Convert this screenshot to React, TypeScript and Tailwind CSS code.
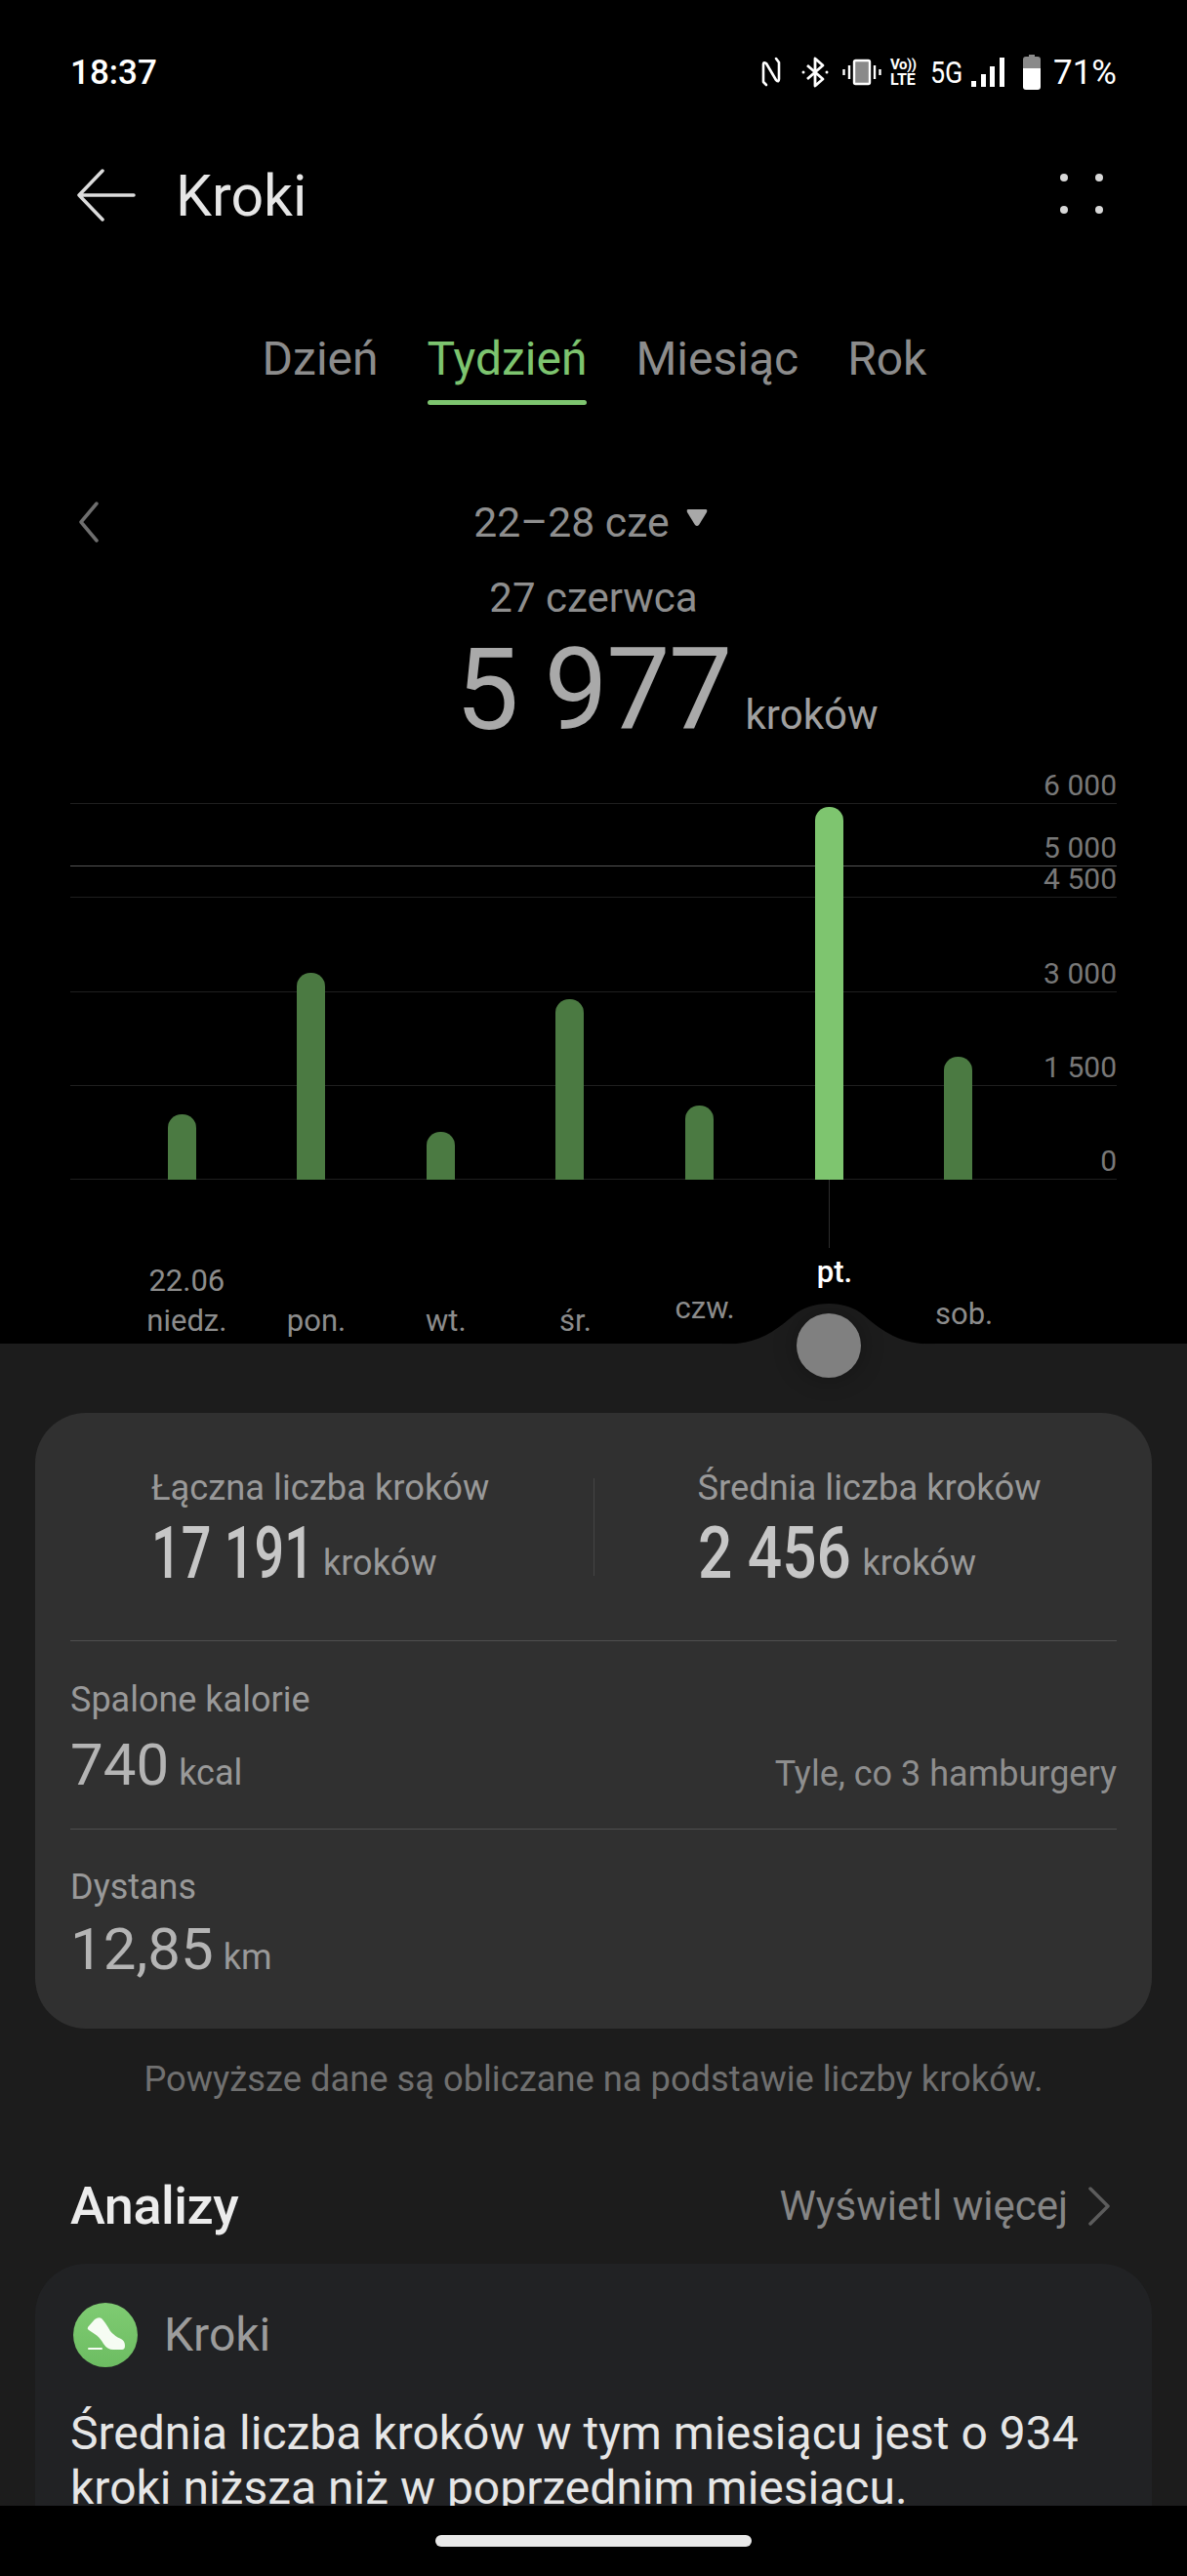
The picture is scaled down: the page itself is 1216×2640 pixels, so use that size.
import React from "react";

const roboto = "font-['Roboto',sans-serif]";

const bars = [
  { h: 67, on: false },
  { h: 212, on: false },
  { h: 49, on: false },
  { h: 185, on: false },
  { h: 76, on: false },
  { h: 382, on: true },
  { h: 126, on: false },
];

const gridRows = ["6 000", "4 500", "3 000", "1 500", "0"];

function StatusIcons() {
  return (
    <div className="flex items-center">
      <svg width="20" height="32" viewBox="0 0 20 32" fill="none" stroke="#fff" strokeWidth="2.6" strokeLinecap="round" strokeLinejoin="round">
        <path d="M5 29 L2 26 V8 Q2 5 5 7 L15 24 Q18 27 18 23 V6 L15 2" />
      </svg>
      <svg className="ml-[20px]" width="30" height="32" viewBox="0 0 30 32" fill="none" stroke="#fff" strokeWidth="2.8" strokeLinejoin="round">
        <path d="M7 9 L23 23 L15 30 V2 L23 9 L7 23" />
        <circle cx="3" cy="16" r="1.5" fill="#fff" stroke="none" />
        <circle cx="27" cy="16" r="1.5" fill="#fff" stroke="none" />
      </svg>
      <svg className="ml-[13px]" width="40" height="28" viewBox="0 0 40 28" fill="none">
        <rect x="12" y="2" width="16" height="24" rx="1.5" fill="#8a8a8a" stroke="#fff" strokeWidth="2.4" />
        <path d="M7 7 V21 M33 7 V21" stroke="#fff" strokeWidth="2.4" />
        <path d="M1.5 11 V17 M38.5 11 V17" stroke="#fff" strokeWidth="2.4" />
      </svg>
      <div className="ml-[9px] flex w-[30px] flex-col items-start font-bold text-white">
        <span className="text-[15px] leading-[15px] tracking-[-0.5px]">Vo))</span>
        <span className="text-[16px] leading-[16px]">LTE</span>
      </div>
      <span className="ml-[11px] inline-block w-[31px] origin-left scale-x-[0.84] whitespace-nowrap text-[32px] leading-none text-white">5G</span>
      <svg className="ml-[11px]" width="34" height="30" viewBox="0 0 34 30" fill="#fff">
        <rect x="0" y="24" width="5" height="6" />
        <rect x="10" y="17" width="5" height="13" />
        <rect x="19" y="9" width="5" height="21" />
        <rect x="29" y="0" width="5" height="30" />
      </svg>
      <svg className="ml-[19px]" width="18" height="36" viewBox="0 0 18 36">
        <path d="M6 0 H12 V2 H15 Q18 2 18 5 V16 H0 V5 Q0 2 3 2 H6 Z" fill="#8a8a8a" />
        <path d="M0 14 H18 V33 Q18 36 15 36 H3 Q0 36 0 33 Z" fill="#fff" />
      </svg>
      <span className="ml-[13px] text-[35px] leading-none text-white">71%</span>
    </div>
  );
}

function App() {
  return (
    <div className={`flex h-[2640px] w-[1216px] flex-col overflow-hidden bg-black ${roboto}`}>
      {/* status bar */}
      <div className="flex h-[148px] shrink-0 items-center justify-between px-[72px]">
        <span className="text-[35px] font-medium leading-none text-white">18:37</span>
        <StatusIcons />
      </div>

      {/* app bar */}
      <div className="flex h-[104px] shrink-0 items-center justify-between pl-[79px] pr-[72px]">
        <div className="flex items-center">
          <svg width="60" height="56" viewBox="0 0 60 56" fill="none" stroke="#dcdcdc" strokeWidth="3.5" strokeLinecap="round" strokeLinejoin="round">
            <path d="M26 3 L2 28 L26 53 M2 28 H58" />
          </svg>
          <span className="ml-[41px] text-[59px] leading-none text-[#e6e6e6]">Kroki</span>
        </div>
        <div className="mb-[4px] mr-[14px] grid grid-cols-2 gap-x-[28px] gap-y-[25px]">
          <span className="h-[8px] w-[8px] rounded-full bg-[#d8d8d8]" />
          <span className="h-[8px] w-[8px] rounded-full bg-[#d8d8d8]" />
          <span className="h-[8px] w-[8px] rounded-full bg-[#d8d8d8]" />
          <span className="h-[8px] w-[8px] rounded-full bg-[#d8d8d8]" />
        </div>
      </div>

      {/* tabs */}
      <div className="mt-[86px] flex shrink-0 justify-center gap-[50px] pl-[2px] text-[48px] leading-[60px] text-[#8c8c8c]">
        <span>Dzień</span>
        <div className="flex flex-col">
          <span className="text-[#7dc46f]">Tydzień</span>
          <span className="mt-[12px] h-[5px] rounded-full bg-[#7dc46f]" />
        </div>
        <span>Miesiąc</span>
        <span>Rok</span>
      </div>

      {/* period selector */}
      <div className="mt-[95px] grid shrink-0 grid-cols-[1fr_auto_1fr] items-center px-[72px]">
        <svg className="ml-[8px]" width="22" height="42" viewBox="0 0 22 42" fill="none" stroke="#6e6e6e" strokeWidth="3.5" strokeLinecap="round" strokeLinejoin="round">
          <path d="M19 2 L3 21 L19 40" />
        </svg>
        <div className="mr-[6px] flex items-center">
          <span className="text-[42.7px] leading-[50px] text-[#8e8e8e]">22–28 cze</span>
          <svg className="mb-[8px] ml-[17px]" width="22" height="18" viewBox="0 0 22 18" fill="#a8a8a8">
            <path d="M2 0 H20 Q22 0 21 3 L13 16 Q11 18 9 16 L1 3 Q0 0 2 0 Z" />
          </svg>
        </div>
        <span />
      </div>

      <div className="mt-[28px] shrink-0 text-center text-[42px] leading-[50px] text-[#8e8e8e]">27 czerwca</div>

      <div className="mt-[13px] flex h-[112px] shrink-0 items-baseline justify-center pl-[150px]">
        <span className="text-[116px] leading-[112px] tracking-[-1.5px] text-[#a9a9a9]">5 977</span>
        <span className="ml-[15px] text-[42px] leading-none text-[#a0a0a0]">kroków</span>
      </div>

      {/* chart */}
      <div className="relative mx-[72px] mt-[60px] h-[386px] shrink-0">
        <div className="flex h-full flex-col justify-between">
          {gridRows.map((label) => (
            <div key={label} className="relative h-px bg-[#1f1f1f]">
              <span className="absolute bottom-[1px] right-0 text-[30px] leading-[36px] text-[#787878]">{label}</span>
            </div>
          ))}
        </div>
        <div className="absolute inset-x-0 top-[64px] h-px bg-[#555555]">
          <span className="absolute bottom-[1px] right-0 text-[30px] leading-[36px] text-[#787878]">5 000</span>
        </div>
        <div className="absolute inset-0 grid w-[976px] grid-cols-7 items-end pl-[48px]">
          {bars.map((b, i) => (
            <div key={i} className="flex justify-center">
              {b.on ? (
                <div className="w-[29px] rounded-t-[14px] bg-[#7ec56f]" style={{ height: b.h }} />
              ) : (
                <div className="w-[29px] rounded-t-[14px] bg-[#4b7a42]" style={{ height: b.h }} />
              )}
            </div>
          ))}
        </div>
      </div>

      {/* day labels */}
      <div className="relative h-[168px] w-[1054px] shrink-0 pl-[125px]">
        <div className="absolute left-[849px] top-0 h-[70px] w-px bg-[#2c2c2c]" />
        <div className="grid h-full grid-cols-7 items-end text-center text-[31px] leading-[36px] text-[#8c8c8c]">
          <div className="mb-[5px] flex flex-col items-center">
            <span className="mb-[5px]">22.06</span>
            <span>niedz.</span>
          </div>
          <span className="mb-[5px]">pon.</span>
          <span className="mb-[5px]">wt.</span>
          <span className="mb-[5px]">śr.</span>
          <span className="mb-[18px]">czw.</span>
          <span className="mb-[55px] font-medium text-white">pt.</span>
          <span className="mb-[12px]">sob.</span>
        </div>
      </div>

      {/* bottom sheet */}
      <div className="relative flex min-h-0 flex-1 flex-col bg-[#1c1c1c] px-[36px] pt-[71px]">
        <svg className="absolute left-[739px] top-[-41px]" width="220" height="42" viewBox="0 0 220 42" fill="#1c1c1c">
          <path d="M0 42 C38 42 55 28 74 12 C92 -4 128 -4 146 12 C165 28 182 42 220 42 Z" />
        </svg>
        <div className="absolute left-[816px] top-[-31px] h-[66px] w-[66px] rounded-full bg-[#808080] shadow-[0_0_24px_rgba(0,0,0,0.3)]" />

        {/* summary card */}
        <div className="flex h-[631px] shrink-0 flex-col rounded-[52px] bg-[#303030] px-[36px]">
          <div className="grid h-[234px] shrink-0 grid-cols-[1fr_1px_1fr] items-center border-b border-[#4f4f4f]">
            <div className="pb-[3px] pl-[83px]">
              <div className="text-[36.3px] leading-[44px] text-[#999999]">Łączna liczba kroków</div>
              <div className="mt-[12px] flex items-baseline">
                <span className="inline-block w-[162px] origin-left scale-x-[0.72] whitespace-nowrap text-[75px] font-medium leading-[64px] text-[#c6c6c6]">17 191</span>
                <span className="ml-[14px] -translate-y-[3px] text-[36px] leading-none text-[#999999]">kroków</span>
              </div>
            </div>
            <div className="h-[100px] w-px bg-[#444444]" />
            <div className="pb-[3px] pl-[106px]">
              <div className="text-[36.3px] leading-[44px] text-[#999999]">Średnia liczba kroków</div>
              <div className="mt-[12px] flex items-baseline">
                <span className="inline-block w-[155px] origin-left scale-x-[0.83] whitespace-nowrap text-[75px] font-medium leading-[64px] text-[#c6c6c6]">2 456</span>
                <span className="ml-[14px] -translate-y-[3px] text-[36px] leading-none text-[#999999]">kroków</span>
              </div>
            </div>
          </div>

          <div className="flex h-[193px] shrink-0 items-end justify-between border-b border-[#4f4f4f] pb-[32px]">
            <div>
              <div className="text-[36px] leading-[44px] text-[#999999]">Spalone kalorie</div>
              <div className="mt-[12px] flex items-baseline">
                <span className="text-[60px] leading-[66px] text-[#b4b4b4]">740</span>
                <span className="ml-[10px] text-[36px] leading-none text-[#999999]">kcal</span>
              </div>
            </div>
            <span className="mb-[2px] text-[36px] leading-[44px] text-[#8e8e8e]">Tyle, co 3 hamburgery</span>
          </div>

          <div className="flex flex-1 items-end pb-[48px]">
            <div>
              <div className="text-[36px] leading-[44px] text-[#999999]">Dystans</div>
              <div className="mt-[9px] flex items-baseline">
                <span className="text-[60px] leading-[66px] text-[#b4b4b4]">12,85</span>
                <span className="ml-[10px] text-[36px] leading-none text-[#999999]">km</span>
              </div>
            </div>
          </div>
        </div>

        <div className="mt-[30px] shrink-0 text-center text-[36.3px] leading-[44px] text-[#707070]">
          Powyższe dane są obliczane na podstawie liczby kroków.
        </div>

        <div className="mt-[78px] flex shrink-0 items-center justify-between px-[36px]">
          <span className="text-[54px] font-medium leading-[60px] tracking-[-0.5px] text-[#ececec]">Analizy</span>
          <div className="flex items-center pr-[6px]">
            <span className="text-[42px] leading-[50px] text-[#858585]">Wyświetl więcej</span>
            <svg className="ml-[20px]" width="24" height="40" viewBox="0 0 24 40" fill="none" stroke="#5c5c5c" strokeWidth="3.5" strokeLinecap="round" strokeLinejoin="round">
              <path d="M3 2 L21 20 L3 38" />
            </svg>
          </div>
        </div>

        {/* insight card */}
        <div className="mt-[29px] flex min-h-0 flex-1 flex-col overflow-hidden rounded-t-[52px] bg-[#212224] px-[36px] pt-[40px]">
          <div className="ml-[3px] flex shrink-0 items-center">
            <svg width="66" height="66" viewBox="0 0 66 66">
              <defs>
                <linearGradient id="stepsGrad" x1="0" y1="0" x2="0" y2="1">
                  <stop offset="0" stopColor="#7fcb72" />
                  <stop offset="1" stopColor="#6dbd62" />
                </linearGradient>
              </defs>
              <circle cx="33" cy="33" r="33" fill="url(#stepsGrad)" />
              <path d="M15 25 L22 17 Q26 14 29 16 Q33 20 38 29 Q42 34 49 37 Q53 39 53 44 Q53 48 50 48 H41 Q35 48 31 42 Q27 35 22 32 L16 28 Q14 27 15 25 Z" fill="#f6fcf3" />
              <path d="M16 47 H29" stroke="#f6fcf3" strokeWidth="2" strokeLinecap="round" />
            </svg>
            <span className="ml-[27px] text-[48px] leading-none text-[#9c9c9c]">Kroki</span>
          </div>
          <p className="mt-[40px] text-[48px] leading-[56px] text-[#e6e6e6]">
            Średnia liczba kroków w tym miesiącu jest o 934 kroki niższa niż w poprzednim miesiącu.
          </p>
        </div>
      </div>

      {/* nav bar */}
      <div className="flex h-[72px] shrink-0 items-start justify-center bg-black pt-[30px]">
        <div className="h-[12px] w-[324px] rounded-full bg-[#e8e8e8]" />
      </div>
    </div>
  );
}

export default App;
